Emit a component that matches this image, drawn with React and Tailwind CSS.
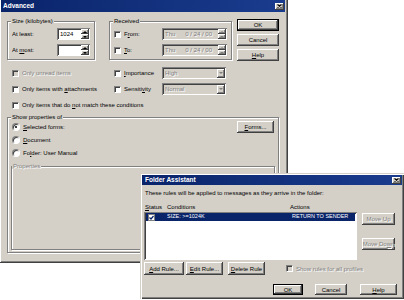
import clsx from "clsx";

const face = "bg-[#d4d0c8]";
const raised = "shadow-[inset_-1px_-1px_0_#404040,inset_1px_1px_0_#fff,inset_-2px_-2px_0_#808080]";
const sunken = "shadow-[inset_1px_1px_0_#808080,inset_-1px_-1px_0_#fff,inset_2px_2px_0_#404040]";
const etched = "border border-[#808080] shadow-[1px_1px_0_#fff,inset_1px_1px_0_#fff]";
const dis = "text-[#808080] [text-shadow:1px_1px_0_#fff]";
const txt = "text-[6px] leading-none whitespace-nowrap";

function Btn({ className, children, disabled, primary }) {
  return (
    <div
      className={clsx(
        "flex items-center justify-center shrink-0",
        txt,
        face,
        raised,
        primary && "border border-black",
        disabled ? dis : "text-black",
        className
      )}
    >
      {children}
    </div>
  );
}

function TitleBar({ title, className }) {
  return (
    <div className={clsx("flex items-center bg-linear-to-r from-[#0a246a] to-[#1a3c8e]", className)}>
      <span className="text-white font-bold text-[6.5px] leading-none">{title}</span>
      <div className={clsx("ml-auto mr-[1px] w-[9px] h-[7px] flex items-center justify-center", face, raised)}>
        <svg width="5" height="4" viewBox="0 0 5 4">
          <path d="M0.5 0.5L4.5 3.5M4.5 0.5L0.5 3.5" stroke="#000" strokeWidth="1.1" />
        </svg>
      </div>
    </div>
  );
}

function Group({ label, className, children, disabled, labelClass = "left-[3px]" }) {
  return (
    <div className={clsx("relative", etched, className)}>
      <span className={clsx("absolute -top-[4px] px-[1px]", txt, face, disabled ? dis : "text-black", labelClass)}>
        {label}
      </span>
      {children}
    </div>
  );
}

function Check({ disabled, className }) {
  return (
    <span
      className={clsx(
        "block w-[7px] h-[7px] shrink-0 border border-t-[#808080] border-l-[#808080] border-b-white border-r-white shadow-[inset_1px_1px_0_#404040]",
        disabled ? face : "bg-white",
        className
      )}
    />
  );
}

function Radio({ on }) {
  return (
    <span className="flex items-center justify-center w-[8px] h-[8px] shrink-0 rounded-full bg-white border border-t-[#808080] border-l-[#808080] border-b-white border-r-white shadow-[inset_1px_1px_0_#404040]">
      {on && <span className="w-[2px] h-[2px] rounded-full bg-black" />}
    </span>
  );
}

function Arrow({ up, disabled }) {
  return (
    <svg width="4" height="2" viewBox="0 0 4 2" className="block">
      <path d={up ? "M0 2L2 0L4 2Z" : "M0 0L2 2L4 0Z"} fill={disabled ? "#808080" : "#000"} />
    </svg>
  );
}

function Spin({ value, disabled, className }) {
  return (
    <div className={clsx("flex items-center h-[12px]", sunken, disabled ? face : "bg-white", className)}>
      <span className={clsx("pl-[3px] whitespace-pre", txt, disabled ? dis : "text-black")}>{value}</span>
      <div className="ml-auto mr-[1px] flex flex-col w-[8px] h-[10px]">
        <div className={clsx("flex-1 flex items-center justify-center", face, raised)}>
          <Arrow up disabled={disabled} />
        </div>
        <div className={clsx("flex-1 flex items-center justify-center", face, raised)}>
          <Arrow disabled={disabled} />
        </div>
      </div>
    </div>
  );
}

function Combo({ value, className }) {
  return (
    <div className={clsx("flex items-center h-[12px]", sunken, face, className)}>
      <span className={clsx("pl-[3px]", txt, dis)}>{value}</span>
      <div className={clsx("ml-auto mr-[1px] w-[8px] h-[9px] flex items-center justify-center", face, raised)}>
        <Arrow disabled />
      </div>
    </div>
  );
}

function Advanced() {
  return (
    <div
      className={clsx(
        "absolute left-0 top-0 w-[288px] h-[263px]",
        face,
        "shadow-[inset_-1px_-1px_0_#404040,inset_1px_0_0_#fff,inset_-2px_-2px_0_#808080]"
      )}
    >
      <TitleBar title="Advanced" className="ml-[1px] mr-[3px] h-[12px] pl-[2px]" />

      <div className="flex items-start mt-[7px] h-[42px]">
        <Group label="Size (kilobytes)" className="ml-[7px] mt-[2px] w-[88px] h-[39px]">
          <div className="pt-[6px] pl-[4px] flex flex-col gap-[4px]">
            <div className="flex items-center h-[12px]">
              <span className={clsx("w-[45px]", txt)}>At least:</span>
              <Spin value="1024" className="w-[33px]" />
            </div>
            <div className="flex items-center h-[12px]">
              <span className={clsx("w-[45px]", txt)}>
                At <u>m</u>ost:
              </span>
              <Spin value="" className="w-[33px]" />
            </div>
          </div>
        </Group>

        <Group label="Received" className="ml-[14px] mt-[2px] w-[123px] h-[39px]">
          <div className="pt-[6px] pl-[4px] flex flex-col gap-[4px]">
            <div className="flex items-center h-[12px]">
              <Check />
              <span className={clsx("ml-[3px] w-[38px]", txt)}>
                F<u>r</u>om:
              </span>
              <Spin value="Thu      0 / 24 / 00" disabled className="w-[65px] h-[11px]" />
            </div>
            <div className="flex items-center h-[12px]">
              <Check />
              <span className={clsx("ml-[3px] w-[38px]", txt)}>
                <u>T</u>o:
              </span>
              <Spin value="Thu      0 / 24 / 00" disabled className="w-[65px] h-[11px]" />
            </div>
          </div>
        </Group>

        <div className="ml-[5px] flex flex-col gap-[3px]">
          <Btn primary className="w-[42px] h-[12px]">OK</Btn>
          <Btn className="w-[42px] h-[12px]">Cancel</Btn>
          <Btn className="w-[42px] h-[12px]">
            <u>H</u>elp
          </Btn>
        </div>
      </div>

      <div className="mt-[6px] flex flex-col gap-[4px]">
        <div className="flex items-center h-[12px]">
          <div className="w-[114px] pl-[12px] flex items-center">
            <Check disabled />
            <span className={clsx("ml-[3px]", txt, dis)}>Only unread items</span>
          </div>
          <Check />
          <span className={clsx("ml-[3px] w-[38px]", txt)}>
            <u>I</u>mportance
          </span>
          <Combo value="High" className="w-[64px]" />
        </div>
        <div className="flex items-center h-[12px]">
          <div className="w-[114px] pl-[12px] flex items-center">
            <Check />
            <span className={clsx("ml-[3px]", txt)}>
              Only items with <u>a</u>ttachments
            </span>
          </div>
          <Check />
          <span className={clsx("ml-[3px] w-[38px]", txt)}>
            Sensiti<u>v</u>ity
          </span>
          <Combo value="Normal" className="w-[64px]" />
        </div>
        <div className="flex items-center h-[12px] pl-[12px]">
          <Check />
          <span className={clsx("ml-[3px]", txt)}>
            Only items that do <u>n</u>ot match these conditions
          </span>
        </div>
      </div>

      <Group label="Show properties of" className="ml-[7px] mt-[6px] w-[272px] h-[136px]">
        <div className="pt-[3px] px-[4px] flex flex-col gap-[1px]">
          <div className="flex items-center h-[12px]">
            <Radio on />
            <span className={clsx("ml-[3px]", txt)}>
              <u>S</u>elected forms:
            </span>
            <Btn className="ml-auto w-[37px] h-[12px]">
              <u>F</u>orms...
            </Btn>
          </div>
          <div className="flex items-center h-[12px]">
            <Radio />
            <span className={clsx("ml-[3px]", txt)}>
              <u>D</u>ocument
            </span>
          </div>
          <div className="flex items-center h-[12px]">
            <Radio />
            <span className={clsx("ml-[3px]", txt)}>
              Fo<u>l</u>der: User Manual
            </span>
          </div>
        </div>
        <Group label="Properties" disabled labelClass="left-0" className="mx-[3px] mt-[7px] h-[84px]" />
      </Group>
    </div>
  );
}

function FolderAssistant() {
  return (
    <div
      className={clsx(
        "absolute left-[140px] top-[173px] w-[264px] h-[126px]",
        face,
        "shadow-[inset_1px_1px_0_#d4d0c8,inset_2px_2px_0_#fff,inset_-1px_-1px_0_#404040,inset_-2px_-2px_0_#808080]"
      )}
    >
      <TitleBar title="Folder Assistant" className="mx-[2px] mt-[2px] h-[10px] pl-[3px]" />

      <div className="pl-[4px]">
        <div className={clsx("mt-[4px] h-[8px] flex items-center pl-[1px]", txt)}>
          These rules will be applied to messages as they arrive in the folder:
        </div>

        <div className={clsx("mt-[6px] h-[8px] flex items-center pl-[1px]", txt)}>
          <span className="w-[22px]">
            <u>S</u>tatus
          </span>
          <span className="w-[123px]">Conditions</span>
          <span>Actions</span>
        </div>

        <div className="mt-[1px] flex items-start">
          <div className={clsx("w-[213px] h-[48px] bg-white pt-[1px] px-[2px]", sunken)}>
            <div className="h-[8px] bg-[#0a246a] flex items-center pl-[2px] text-white text-[5.5px] leading-none whitespace-nowrap">
              <span className="w-[7px] h-[7px] shrink-0 bg-white border border-[#808080] flex items-center justify-center">
                <svg width="5" height="5" viewBox="0 0 5 5">
                  <path d="M0.5 2.5L2 4L4.5 1" stroke="#0a246a" strokeWidth="1.2" fill="none" />
                </svg>
              </span>
              <span className="ml-[12px] w-[125px]">SIZE: &gt;=1024K</span>
              <span>RETURN TO SENDER</span>
            </div>
          </div>
          <div className="ml-[5px] flex flex-col">
            <Btn disabled className="mt-[1px] w-[33px] h-[12px]">
              Move Up
            </Btn>
            <Btn disabled className="mt-[13px] w-[33px] h-[12px]">
              Move Do<u>w</u>n
            </Btn>
          </div>
        </div>

        <div className="mt-[2px] flex items-center">
          <Btn className="w-[40px] h-[13px]">
            <u>A</u>dd Rule...
          </Btn>
          <Btn className="ml-[2px] w-[37px] h-[13px]">
            <u>E</u>dit Rule...
          </Btn>
          <Btn className="ml-[5px] w-[37px] h-[13px]">
            <u>D</u>elete Rule
          </Btn>
          <Check disabled className="ml-[21px]" />
          <span className={clsx("ml-[3px]", txt, dis)}>Show rules for all profiles</span>
        </div>

        <div className="mt-[9px] flex items-center">
          <Btn primary className="ml-[129px] w-[30px] h-[11px]">OK</Btn>
          <Btn className="ml-[12px] w-[32px] h-[11px]">Cancel</Btn>
          <Btn className="ml-[13px] w-[37px] h-[11px]">
            <u>H</u>elp
          </Btn>
        </div>
      </div>
    </div>
  );
}

export default function App() {
  return (
    <div className="relative w-[404px] h-[300px] bg-white overflow-hidden font-['Liberation_Sans',Arial,sans-serif] text-black">
      <Advanced />
      <FolderAssistant />
    </div>
  );
}
